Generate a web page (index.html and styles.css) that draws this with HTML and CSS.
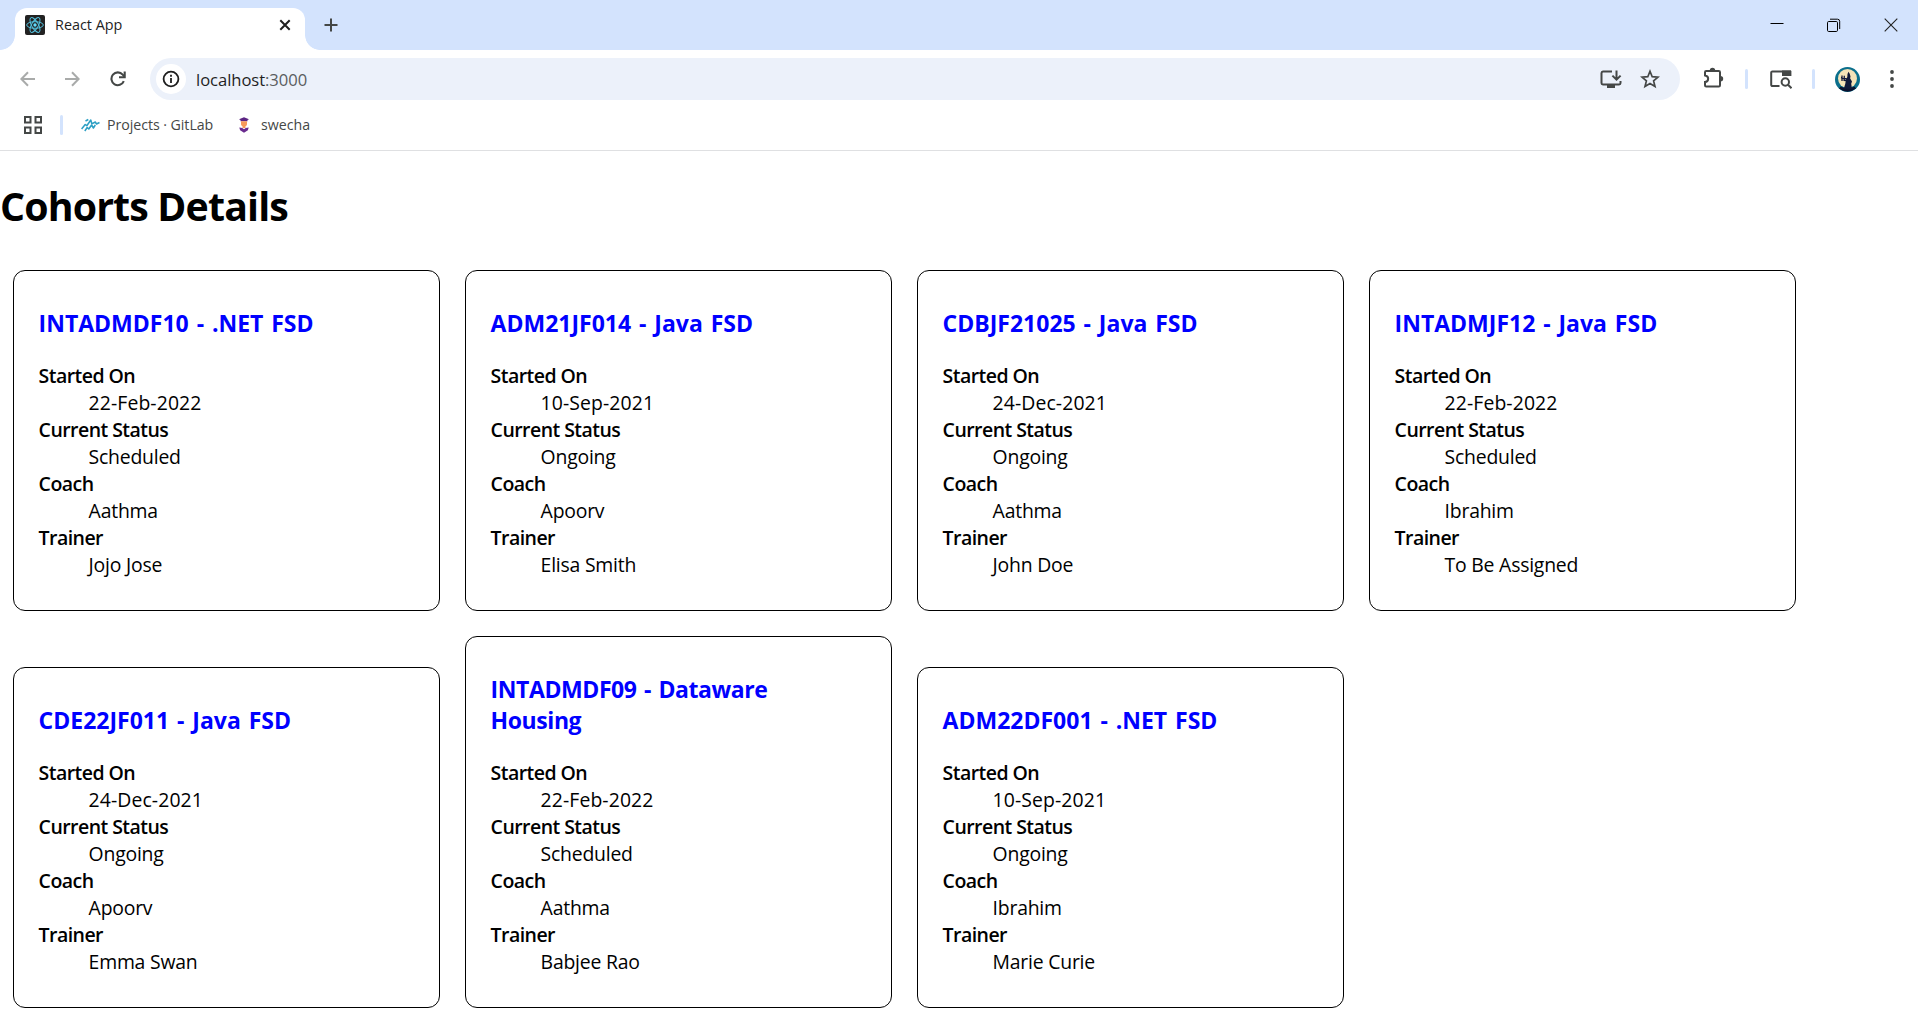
FILE: index.html
```html
<!DOCTYPE html>
<html lang="en">
<head>
<meta charset="utf-8">
<title>React App</title>
<link rel="stylesheet" href="styles.css">
</head>
<body>
<header class="browser">
  <div class="tabstrip">
    <div class="tab">
      <svg class="favicon" width="20" height="20" viewBox="0 0 20 20" fill="none" stroke="#53c1de" stroke-width="1"><rect width="20" height="20" rx="2" fill="#222" stroke="none"/><ellipse cx="10" cy="10" rx="8.3" ry="3.3"/><ellipse cx="10" cy="10" rx="8.3" ry="3.3" transform="rotate(60 10 10)"/><ellipse cx="10" cy="10" rx="8.3" ry="3.3" transform="rotate(120 10 10)"/><circle cx="10" cy="10" r="1.7" fill="#61dafb" stroke="none"/></svg>
      <span class="tab-title">React App</span>
      <svg class="tab-close" width="12" height="12" viewBox="0 0 12 12" stroke="#1f1f1f" stroke-width="2"><path d="M1.3 1.3l9.4 9.4M10.7 1.3l-9.4 9.4"/></svg>
    </div>
    <svg class="new-tab" width="14" height="14" viewBox="0 0 14 14" stroke="#444746" stroke-width="2"><path d="M7 .5v13M.5 7h13"/></svg>
    <div class="window-controls">
      <svg width="14" height="14" viewBox="0 0 14 14" stroke="#000"><path d="M.5 5.5h13"/></svg>
      <svg width="14" height="14" viewBox="0 0 14 14" fill="none" stroke="#000"><rect x=".5" y="3.5" width="10" height="10" rx="1.2"/><path d="M3 1.2h7.5a2.2 2.2 0 0 1 2.2 2.2V11"/></svg>
      <svg width="14" height="14" viewBox="0 0 14 14" stroke="#222" stroke-width="1.1"><path d="M.7.7l12.6 12.6M13.3.7L.7 13.3"/></svg>
    </div>
  </div>

  <div class="toolbar">
    <div class="nav-buttons">
      <svg width="15" height="16" viewBox="0 0 15 16" fill="none" stroke="#a9abaa" stroke-width="2"><path d="M15 8H1.7M8 1.3L1.4 8 8 14.7"/></svg>
      <svg width="15" height="16" viewBox="0 0 15 16" fill="none" stroke="#a9abaa" stroke-width="2"><path d="M0 8h13.3M7 1.3L13.6 8 7 14.7"/></svg>
      <svg width="16" height="16" viewBox="0 0 16 16" fill="none" stroke="#444746" stroke-width="2.1"><path d="M13.8 10.2A6.4 6.4 0 1 1 12.7 3.6L14.4 5.5"/><path d="M14.7.5v5.7H9"/></svg>
    </div>
    <div class="omnibox">
      <span class="site-info"><svg width="18" height="18" viewBox="0 0 18 18" fill="none" stroke="#1f1f1f" stroke-width="1.8"><circle cx="9" cy="9" r="7.4"/><path d="M9 8v5M9 4.8v1.9"/></svg></span>
      <span class="url">localhost<span class="port">:3000</span></span>
      <svg class="install" width="22" height="20" viewBox="0 0 22 20" fill="none" stroke="#444746" stroke-width="2"><path d="M12 2.5H3A1.6 1.6 0 0 0 1.5 4v10A1.6 1.6 0 0 0 3 15.6h16a1.6 1.6 0 0 0 1.5-1.6v-2"/><path d="M7 16h8v3H7z" fill="#444746" stroke="none"/><path d="M16.5 1.5v8.7M12.4 6.6l4.1 4.1 4.1-4.1"/></svg>
      <svg width="20" height="20" viewBox="0 0 20 20" fill="none" stroke="#444746" stroke-width="1.7"><path d="M10 2.3l2.2 5.4 5.8.4-4.4 3.8 1.4 5.6L10 14.5l-5 3 1.4-5.6L2 8.1l5.8-.4z"/></svg>
    </div>
    <div class="actions">
      <svg class="extensions" width="22" height="22" viewBox="0 0 22 22" fill="none" stroke="#444746" stroke-width="2"><path d="M3.2 4h12.6q1.2 0 1.2 1.2v13q0 1.2-1.2 1.2H3.2q-1.2 0-1.2-1.2v-3.2c4.2-.4 4.2-6.2 0-6.6V5.2q0-1.2 1.2-1.2z"/><path d="M6.8 3.5a2.7 2.7 0 0 1 5.4 0zM17.5 9a2.7 2.7 0 0 1 0 5.4z" fill="#444746" stroke="none"/></svg>
      <span class="divider"></span>
      <svg class="side-search" width="22" height="20" viewBox="0 0 22 20" fill="none" stroke="#444746" stroke-width="2"><path d="M9.5 17H2.5A1.2 1.2 0 0 1 1.2 15.8V3.7A1.2 1.2 0 0 1 2.5 2.5H20v4.5"/><path d="M12 1.5h8.5q.9 0 .9.9V7H12z" fill="#444746" stroke="none"/><circle cx="15.3" cy="13" r="3.7"/><path d="M18 15.7l3.5 3.5"/></svg>
      <span class="divider"></span>
      <svg class="avatar" width="25" height="25" viewBox="0 0 25 25"><circle cx="12.5" cy="12.5" r="12.5" fill="#0b6f8c"/><circle cx="12.5" cy="11.5" r="9.5" fill="#f5e3b8"/><path d="M5.5 19.5q7 3 14 0l1.5 2Q12.5 28 4 21.5z" fill="#0a1230"/><path d="M12.3 10l.2-3 1-2.2 1.2 2 .8 2.8-.4 1.7 1.9 3.2-.8 2.2.8 5H8.8l1.5-5 .6-4z" fill="#10183a"/><path d="M6 10.8l6 1M7 8.5v5.5M9.3 8.8l-.2 4.6 3 .2" fill="none" stroke="#10183a" stroke-width="1.3"/></svg>
      <svg class="menu" width="4" height="18" viewBox="0 0 4 18" fill="#444746"><circle cx="2" cy="2" r="1.9"/><circle cx="2" cy="9" r="1.9"/><circle cx="2" cy="16" r="1.9"/></svg>
    </div>
  </div>

  <nav class="bookmarks">
    <svg class="apps" width="18" height="18" viewBox="0 0 18 18" fill="none" stroke="#444746" stroke-width="2"><path d="M1 1h5.5v5.5H1zM11.5 1H17v5.5h-5.5zM1 11.5h5.5V17H1zM11.5 11.5H17V17h-5.5z"/></svg>
    <span class="divider"></span>
    <a class="bookmark gitlab"><svg width="19" height="14" viewBox="0 0 19 14" fill="none" stroke="#2b9fc4" stroke-width="1.5" stroke-linejoin="round"><path d="M.6 11L4.200 6.500l1.600 1.200L9.800 2l1 3.800L14.300 4l1.200 2 3-1.500"/><path d="M3.800 13l2.400-3.500 1.600 1.500L10.600 7l1.800 3L14.300 7M4.500 3l2.800-1.500"/></svg>Projects · GitLab</a>
    <a class="bookmark swecha"><svg width="10" height="16" viewBox="0 0 10 16"><path d="M0 2.2L5 .3l5 1.900-1.500.8v1.200h-7V3z" fill="#5b2483"/><path d="M2 4.200h6V7.500Q7.500 9 6.500 9.300V11h-3V9.300Q2.500 9 2 7.500z" fill="#f79a5b"/><path d="M.3 10.500l3 .6L5 12.300l1.700-1.200 3-.6-.8 2.700L5 15.800l-3.900-2.600z" fill="#6a2b8f"/></svg>swecha</a>
  </nav>
</header>

<main class="page">
  <h1 class="page-title">Cohorts Details</h1>
  <div class="cohorts">
    <section class="cohort"><h3>INTADMDF10 - .NET FSD</h3><dl><dt>Started On</dt><dd>22-Feb-2022</dd><dt>Current Status</dt><dd>Scheduled</dd><dt>Coach</dt><dd>Aathma</dd><dt>Trainer</dt><dd>Jojo Jose</dd></dl></section>
    <section class="cohort"><h3>ADM21JF014 - Java FSD</h3><dl><dt>Started On</dt><dd>10-Sep-2021</dd><dt>Current Status</dt><dd>Ongoing</dd><dt>Coach</dt><dd>Apoorv</dd><dt>Trainer</dt><dd>Elisa Smith</dd></dl></section>
    <section class="cohort"><h3>CDBJF21025 - Java FSD</h3><dl><dt>Started On</dt><dd>24-Dec-2021</dd><dt>Current Status</dt><dd>Ongoing</dd><dt>Coach</dt><dd>Aathma</dd><dt>Trainer</dt><dd>John Doe</dd></dl></section>
    <section class="cohort"><h3>INTADMJF12 - Java FSD</h3><dl><dt>Started On</dt><dd>22-Feb-2022</dd><dt>Current Status</dt><dd>Scheduled</dd><dt>Coach</dt><dd>Ibrahim</dd><dt>Trainer</dt><dd>To Be Assigned</dd></dl></section>
    <section class="cohort"><h3>CDE22JF011 - Java FSD</h3><dl><dt>Started On</dt><dd>24-Dec-2021</dd><dt>Current Status</dt><dd>Ongoing</dd><dt>Coach</dt><dd>Apoorv</dd><dt>Trainer</dt><dd>Emma Swan</dd></dl></section>
    <section class="cohort"><h3 class="long">INTADMDF09 - Dataware Housing</h3><dl><dt>Started On</dt><dd>22-Feb-2022</dd><dt>Current Status</dt><dd>Scheduled</dd><dt>Coach</dt><dd>Aathma</dd><dt>Trainer</dt><dd>Babjee Rao</dd></dl></section>
    <section class="cohort"><h3>ADM22DF001 - .NET FSD</h3><dl><dt>Started On</dt><dd>10-Sep-2021</dd><dt>Current Status</dt><dd>Ongoing</dd><dt>Coach</dt><dd>Ibrahim</dd><dt>Trainer</dt><dd>Marie Curie</dd></dl></section>
  </div>
</main>
</body>
</html>
```
FILE: styles.css
```css
* { box-sizing: border-box; }

body {
  margin: 0;
  height: 1015px;
  overflow: hidden;
  background: #fff;
  color: #000;
  font-family: "Open Sans", "Noto Sans", sans-serif;
}

svg { display: block; flex: none; }

/* Browser window */
.browser { border-bottom: 1px solid #dfe0e2; height: 151px; }

.tabstrip {
  display: flex;
  align-items: center;
  height: 50px;
  padding-left: 15px;
  background: #d3e3fd;
}

.tab {
  position: relative;
  display: flex;
  align-items: center;
  align-self: flex-end;
  width: 290px;
  height: 42px;
  padding: 0 14px 8px 10px;
  border-radius: 12px 12px 0 0;
  background: #fff;
}

.tab::before,
.tab::after {
  content: "";
  position: absolute;
  bottom: 0;
  width: 15px;
  height: 15px;
}

.tab::before {
  left: -15px;
  background: radial-gradient(circle at 0 0, #d3e3fd 14.5px, #fff 15.2px);
}

.tab::after {
  right: -15px;
  background: radial-gradient(circle at 100% 0, #d3e3fd 14.5px, #fff 15.2px);
}

.tab-title {
  flex: 1;
  margin-left: 10px;
  color: #1f1f1f;
  font-size: 14.4px;
  line-height: 20px;
}

.new-tab { margin-left: 19px; }

.window-controls {
  display: flex;
  gap: 43px;
  margin-left: auto;
  padding-right: 20px;
}

.toolbar { display: flex; align-items: center; height: 58px; }

.nav-buttons { display: flex; gap: 30px; width: 150px; padding-left: 20px; }

.omnibox {
  display: flex;
  align-items: center;
  width: 1530px;
  height: 42px;
  padding: 0 20px 0 6px;
  border-radius: 21px;
  background: #ecf1fa;
}

.site-info {
  display: flex;
  align-items: center;
  justify-content: center;
  width: 30px;
  height: 30px;
  border-radius: 50%;
  background: #fff;
}

.url {
  margin-left: 10px;
  padding-top: 1px;
  color: #1f1f1f;
  font-size: 16.6px;
  line-height: 24px;
  letter-spacing: -0.05px;
}

.port { color: #5a5d60; }

.install { margin-left: auto; margin-right: 18px; }

.actions { display: flex; align-items: center; padding-left: 23px; }

.divider { width: 3px; height: 20px; border-radius: 2px; background: #d3e3fd; }

.extensions { margin-right: 20px; margin-top: -2px; }
.side-search { margin: 0 20px 0 22px; }
.avatar { margin-left: 20px; margin-right: 30px; }

.bookmarks { display: flex; align-items: center; height: 34px; padding-left: 23.5px; }
.apps { margin-right: 18.5px; }

.bookmark {
  display: flex;
  align-items: center;
  color: #444746;
  font-size: 14.2px;
  line-height: 20px;
}

.gitlab { gap: 7px; margin-left: 18px; width: 158px; letter-spacing: -0.05px; }
.swecha { gap: 12px; }

/* Cohort page */
.page-title {
  margin: 28px 0 37px;
  font-size: 39.3px;
  line-height: 54px;
  font-weight: 700;
  letter-spacing: -0.85px;
}

.cohorts {
  display: grid;
  grid-template-columns: repeat(4, 427px);
  gap: 25px;
  align-items: end;
  padding-left: 13px;
}

.cohort {
  padding: 13px 25px 12px 24.6px;
  border: 1px solid #000;
  border-radius: 12px;
}

.cohort h3 {
  margin: 24px 50px 23px 0;
  color: #00f;
  font-size: 23px;
  line-height: 31px;
  font-weight: 700;
  word-spacing: 1.9px;
}

.cohort h3.long { letter-spacing: -0.42px; }

.cohort dl { margin: 0 0 20px; line-height: 27px; }
.cohort dt { font-size: 19.5px; font-weight: 600; letter-spacing: -0.55px; }
.cohort dd { margin-left: 50px; font-size: 19.4px; letter-spacing: -0.22px; }
.cohort dd:first-of-type { letter-spacing: 0.1px; }
```
